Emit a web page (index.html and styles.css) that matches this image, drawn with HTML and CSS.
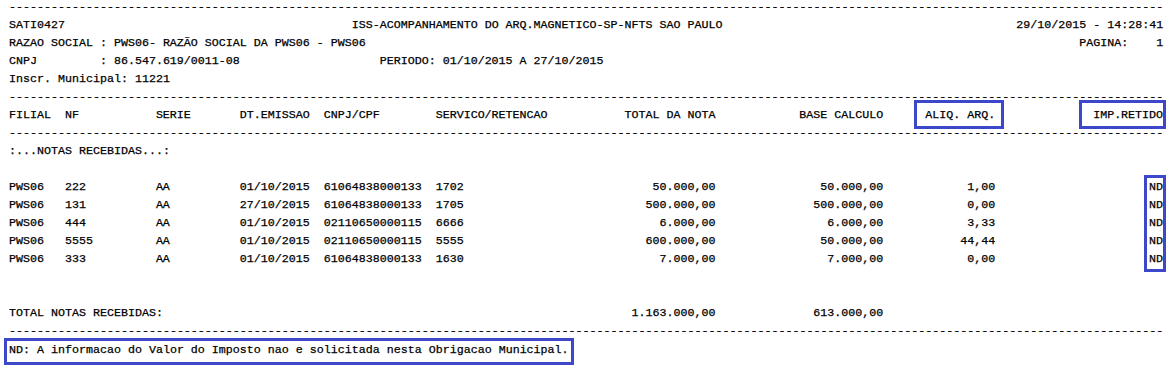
FILE: index.html
```html
<!DOCTYPE html>
<html lang="pt-BR">
<head>
<meta charset="utf-8">
<title>SATI0427 - ISS</title>
<link rel="stylesheet" href="styles.css">
</head>
<body>
<main class="report">
  <div class="rule">---------------------------------------------------------------------------------------------------------------------------------------------------------------------</div>

  <header class="meta">
    <div class="meta-top">
      <span>SATI0427</span>
      <span>ISS-ACOMPANHAMENTO DO ARQ.MAGNETICO-SP-NFTS SAO PAULO</span>
      <span>29/10/2015 - 14:28:41</span>
    </div>
    <div class="meta-line">
      <span class="lbl">RAZAO SOCIAL</span>
      <span>: PWS06- RAZÃO SOCIAL DA PWS06 - PWS06</span>
      <span class="page">PAGINA:    1</span>
    </div>
    <div class="meta-line">
      <span class="lbl">CNPJ</span>
      <span class="cnpj">: 86.547.619/0011-08</span>
      <span>PERIODO: 01/10/2015 A 27/10/2015</span>
    </div>
    <div class="meta-line">
      <span>Inscr. Municipal: 11221</span>
    </div>
  </header>

  <div class="rule">---------------------------------------------------------------------------------------------------------------------------------------------------------------------</div>

  <div class="tbl">
    <span>FILIAL</span>
    <span>NF</span>
    <span>SERIE</span>
    <span>DT.EMISSAO</span>
    <span>CNPJ/CPF</span>
    <span>SERVICO/RETENCAO</span>
    <span class="r">TOTAL DA NOTA</span>
    <span class="r">BASE CALCULO</span>
    <span class="r"><span class="hl hl-aliq">ALIQ. ARQ.</span></span>
    <span class="r"><span class="hl hl-imp">IMP.RETIDO</span></span>
  </div>

  <div class="rule">---------------------------------------------------------------------------------------------------------------------------------------------------------------------</div>

  <div class="section">:...NOTAS RECEBIDAS...:</div>

  <div class="tbl rows">
    <span>PWS06</span><span>222</span><span>AA</span><span>01/10/2015</span><span>61064838000133</span><span>1702</span><span class="r">50.000,00</span><span class="r">50.000,00</span><span class="r">1,00</span><span class="r">ND</span>
    <span>PWS06</span><span>131</span><span>AA</span><span>27/10/2015</span><span>61064838000133</span><span>1705</span><span class="r">500.000,00</span><span class="r">500.000,00</span><span class="r">0,00</span><span class="r">ND</span>
    <span>PWS06</span><span>444</span><span>AA</span><span>01/10/2015</span><span>02110650000115</span><span>6666</span><span class="r">6.000,00</span><span class="r">6.000,00</span><span class="r">3,33</span><span class="r">ND</span>
    <span>PWS06</span><span>5555</span><span>AA</span><span>01/10/2015</span><span>02110650000115</span><span>5555</span><span class="r">600.000,00</span><span class="r">50.000,00</span><span class="r">44,44</span><span class="r">ND</span>
    <span>PWS06</span><span>333</span><span>AA</span><span>01/10/2015</span><span>61064838000133</span><span>1630</span><span class="r">7.000,00</span><span class="r">7.000,00</span><span class="r">0,00</span><span class="r">ND</span>
    <div class="nd-box"></div>
  </div>

  <div class="tbl total">
    <span class="total-label">TOTAL NOTAS RECEBIDAS:</span>
    <span class="r">1.163.000,00</span>
    <span class="r">613.000,00</span>
  </div>

  <div class="rule">---------------------------------------------------------------------------------------------------------------------------------------------------------------------</div>

  <p class="note">ND: A informacao do Valor do Imposto nao e solicitada nesta Obrigacao Municipal.</p>
</main>
</body>
</html>
```

FILE: styles.css
```css
html, body {
  margin: 0;
  padding: 0;
  background: #ffffff;
}

body {
  color: #000000;
  font-family: "Liberation Mono", "Courier New", monospace;
  font-size: 11.6667px;
  line-height: 18px;
  -webkit-text-stroke: 0.25px #000000;
}

.report {
  width: 165ch;
  margin: -2px 0 0 9px;
}

.rule {
  white-space: nowrap;
}

.meta-top {
  display: grid;
  grid-template-columns: 49ch 1fr auto;
}

.meta-line {
  display: flex;
}

.lbl {
  width: 13ch;
}

.cnpj {
  width: 40ch;
}

.page {
  margin-left: auto;
  white-space: pre;
}

.tbl {
  display: grid;
  grid-template-columns: 8ch 13ch 12ch 12ch 16ch 27ch 13ch 24ch 16ch 24ch;
  white-space: nowrap;
}

.r {
  text-align: right;
}

.section {
  margin-bottom: 18px;
}

.rows {
  position: relative;
}

.total {
  margin-top: 36px;
}

.total-label {
  grid-column: 1 / 7;
}

.note {
  display: inline-block;
  margin: -2px 0 0 -5px;
  padding: 0 2px 3px;
  border: 3px solid #3d47c9;
  white-space: nowrap;
}

.hl {
  position: relative;
}

.hl::after {
  content: "";
  position: absolute;
  border: 3px solid #3d47c9;
  pointer-events: none;
}

.hl-aliq::after {
  top: -8px;
  bottom: -7px;
  left: -11px;
  right: -9px;
}

.hl-imp::after {
  top: -8px;
  bottom: -7px;
  left: -14px;
  right: -3px;
}

.nd-box {
  position: absolute;
  top: -3px;
  bottom: -4px;
  right: -3px;
  width: 22px;
  border: 3px solid #3d47c9;
  box-sizing: border-box;
}
```
